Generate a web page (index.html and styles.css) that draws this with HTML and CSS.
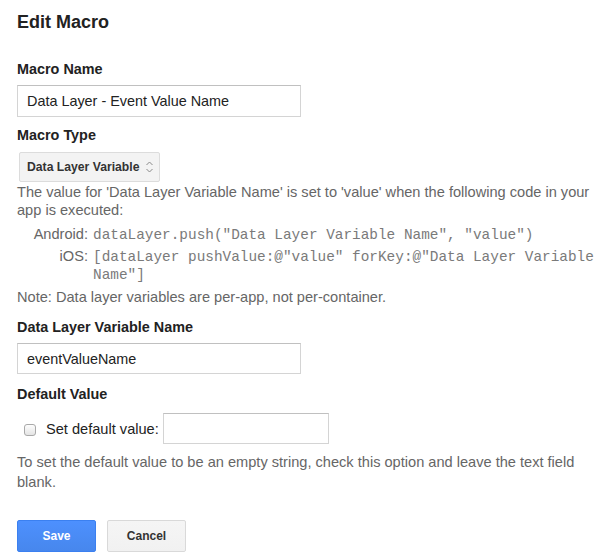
FILE: index.html
```html
<!DOCTYPE html>
<html>
<head>
<meta charset="utf-8">
<link rel="stylesheet" href="styles.css">
</head>
<body>
<div class="page">
  <h1 class="title">Edit Macro</h1>

  <div class="label first">Macro Name</div>
  <div class="input wide">Data Layer - Event Value Name</div>

  <div class="label type-label">Macro Type</div>
  <div class="select">
    <span>Data Layer Variable</span>
    <svg class="arrows" width="9" height="16" viewBox="0 0 9 16">
      <path d="M1.5 6 L4.5 3 L7.5 6" fill="none" stroke="#8a8a8a" stroke-width="1"/>
      <path d="M1.5 10 L4.5 13 L7.5 10" fill="none" stroke="#8a8a8a" stroke-width="1"/>
    </svg>
  </div>

  <p class="desc">The value for 'Data Layer Variable Name' is set to 'value' when the following code in your app is executed:</p>
  <div class="code">
    <div class="code-label">Android:</div>
    <div class="code-text">dataLayer.push("Data Layer Variable Name", "value")</div>
    <div class="code-label">iOS:</div>
    <div class="code-text">[dataLayer pushValue:@"value" forKey:@"Data Layer Variable Name"]</div>
  </div>
  <p class="note">Note: Data layer variables are per-app, not per-container.</p>

  <div class="label dlv-label">Data Layer Variable Name</div>
  <div class="input wide dlv-input">eventValueName</div>

  <div class="label default-label">Default Value</div>
  <div class="check-row">
    <span class="checkbox"></span>
    <span class="check-text">Set default value:</span>
    <div class="input small"></div>
  </div>

  <p class="help">To set the default value to be an empty string, check this option and leave the text field blank.</p>

  <div class="buttons">
    <button class="btn primary">Save</button>
    <button class="btn">Cancel</button>
  </div>
</div>
</body>
</html>
```

FILE: styles.css
```css
html, body {
  margin: 0;
  padding: 0;
  background: #fff;
}

body {
  font-family: "Liberation Sans", Arial, sans-serif;
  font-size: 14.6px;
  color: #222;
}

.page {
  padding: 0 5px 0 17px;
}

.title {
  margin: 11px 0 0;
  font-size: 18px;
  line-height: 22px;
  font-weight: bold;
  color: #222;
}

.label {
  font-weight: bold;
  font-size: 14.4px;
  line-height: 18px;
  color: #222;
}

.label.first { margin-top: 27px; }
.label.type-label { margin-top: 9px; }
.label.dlv-label { margin-top: 12px; }
.label.default-label { margin-top: 11px; }

.input {
  box-sizing: border-box;
  border: 1px solid #d4d4d4;
  border-top-color: #c0c0c0;
  background: #fff;
  font-size: 14.4px;
  color: #222;
  display: flex;
  align-items: center;
  padding-left: 9px;
}

.input.wide {
  width: 284px;
  height: 32px;
  margin-top: 7px;
}

.input.dlv-input {
  margin-top: 7px;
  height: 31px;
}

.select {
  box-sizing: border-box;
  width: 141px;
  height: 30px;
  margin: 8px 0 0 2px;
  border: 1px solid #dcdcdc;
  border-radius: 2px;
  background: #f3f3f3;
  display: flex;
  align-items: center;
  justify-content: space-between;
  padding: 0 5px 0 7px;
  font-size: 12.2px;
  font-weight: bold;
  color: #333;
}

.arrows {
  display: block;
}

.desc {
  margin: 1px 0 0;
  line-height: 18px;
  color: #666;
}

.code {
  margin-top: 6px;
  display: grid;
  grid-template-columns: 71px 1fr;
  column-gap: 5px;
  row-gap: 3px;
  align-items: baseline;
}

.code-label {
  text-align: right;
  color: #666;
  line-height: 19px;
}

.code-text {
  font-family: "Liberation Mono", "Courier New", monospace;
  font-size: 14.4px;
  line-height: 18px;
  color: #7a7a7a;
}

.note {
  margin: 4px 0 0;
  line-height: 18px;
  color: #666;
}

.check-row {
  margin-top: 10px;
  display: flex;
  align-items: center;
  line-height: 18px;
}

.checkbox {
  box-sizing: border-box;
  width: 12px;
  height: 12px;
  margin: 2px 0 0 7px;
  border: 1px solid #a9a9a9;
  border-radius: 3px;
  background: linear-gradient(#fdfdfd, #e4e4e4);
}

.check-text {
  margin-left: 10px;
  color: #222;
}

.input.small {
  width: 166px;
  height: 31px;
  margin-left: 4px;
}

.help {
  margin: 8px 0 0;
  line-height: 20px;
  color: #666;
}

.buttons {
  margin-top: 28px;
  display: flex;
  gap: 11px;
}

.btn {
  box-sizing: border-box;
  height: 32px;
  width: 79px;
  border: 1px solid #d9d9d9;
  border-radius: 2px;
  background: linear-gradient(#f5f5f5, #f1f1f1);
  font-family: "Liberation Sans", Arial, sans-serif;
  font-size: 12px;
  font-weight: bold;
  color: #333;
  padding: 0;
}

.btn.primary {
  background: linear-gradient(#4d90fe, #4787ed);
  border-color: #3b80f0;
  color: #fff;
}
```
